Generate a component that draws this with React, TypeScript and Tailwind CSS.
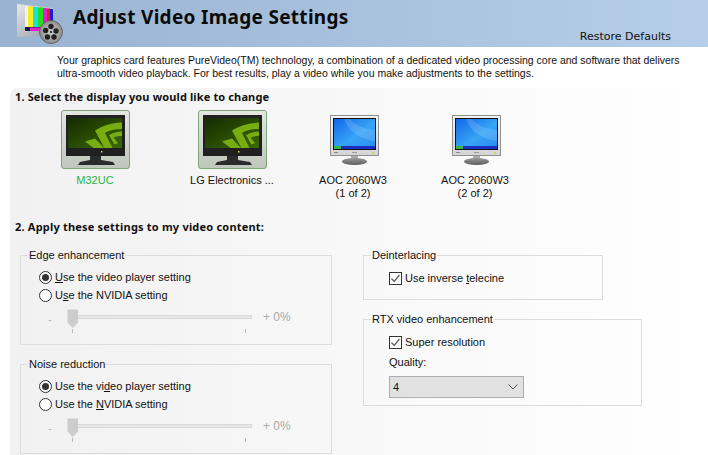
import React from "react"

const ui = "font-['Liberation_Sans',Arial,sans-serif] text-[11px] leading-[15px] text-[#111]"

const NvidiaMonitor = () => (
  <svg width="69" height="59" viewBox="0 0 69 59">
    <defs>
      <linearGradient id="tile" x1="0" y1="0" x2="0" y2="1">
        <stop offset="0" stopColor="#e4e6e2" />
        <stop offset="1" stopColor="#bfc6bb" />
      </linearGradient>
      <linearGradient id="nvscreen" x1="0" y1="0" x2="1" y2="1">
        <stop offset="0" stopColor="#152a02" />
        <stop offset="1" stopColor="#3c6a04" />
      </linearGradient>
      <clipPath id="nvclip">
        <rect x="7" y="8" width="54" height="30" />
      </clipPath>
    </defs>
    <rect x="0.5" y="0.5" width="68" height="58" rx="2.5" fill="url(#tile)" stroke="#7ea777" />
    <rect x="5" y="5" width="59" height="41" fill="#202020" />
    <rect x="7" y="8" width="54" height="30" fill="url(#nvscreen)" />
    <g clipPath="url(#nvclip)" fill="#77ad10">
      <path d="M61 12.5C50 13 41 16 34 20.5L44 39H52L44 23C48 20.5 54 19 61 19Z" />
      <path d="M61 21.5C56 21.5 52 23 48 25L53 34C54 34.5 56 34 57 33L52.5 27.5C55 26.5 58 26 61 26Z" />
      <path d="M24 31.5L34 28.5L44 39H34Z" />
    </g>
    <rect x="40" y="41" width="1.5" height="1.5" fill="#d9d24a" />
    <path d="M29 46H40V50L52 52L54 55H17L19 52L29 50Z" fill="#2b2b2b" />
  </svg>
)

const BlueMonitor = () => (
  <svg width="50" height="51" viewBox="0 0 50 51">
    <defs>
      <linearGradient id="bezel" x1="0" y1="0" x2="0" y2="1">
        <stop offset="0" stopColor="#f4f4f4" />
        <stop offset="1" stopColor="#d4d4d4" />
      </linearGradient>
      <linearGradient id="blue" x1="0" y1="0" x2="1" y2="1">
        <stop offset="0" stopColor="#1167e8" />
        <stop offset="0.55" stopColor="#37a4f6" />
        <stop offset="1" stopColor="#2a8af0" />
      </linearGradient>
      <linearGradient id="foot" x1="0" y1="0" x2="0" y2="1">
        <stop offset="0" stopColor="#9a9a9a" />
        <stop offset="1" stopColor="#5c5c5c" />
      </linearGradient>
    </defs>
    <rect x="0.5" y="0.5" width="48" height="40" fill="url(#bezel)" stroke="#909090" />
    <rect x="3" y="3" width="43" height="32" fill="#111" />
    <rect x="4" y="4" width="41" height="30" fill="url(#blue)" />
    <path d="M14 4C18 16 30 24 45 26V15C34 14 24 10 20 4Z" fill="#ffffff" fillOpacity="0.14" />
    <rect x="4" y="31" width="41" height="3" fill="#1a2fc4" />
    <rect x="4" y="31" width="7" height="3" fill="#36b24a" />
    <rect x="4" y="37" width="4" height="1" fill="#8a8a8a" />
    <rect x="22" y="37" width="5" height="1" fill="#9a9a9a" />
    <rect x="42" y="37" width="2" height="2" fill="#b9dc6a" />
    <rect x="21" y="41" width="7" height="4" fill="#a8a8a8" />
    <ellipse cx="24.5" cy="46.5" rx="12.5" ry="3.5" fill="url(#foot)" />
  </svg>
)

const HeaderIcon = () => (
  <svg width="50" height="40" viewBox="0 0 50 40">
    <defs>
      <linearGradient id="tv" x1="0" y1="0" x2="1" y2="1">
        <stop offset="0" stopColor="#e8e8e8" />
        <stop offset="1" stopColor="#8f9aa6" />
      </linearGradient>
      <radialGradient id="reel">
        <stop offset="0" stopColor="#d8d8d8" />
        <stop offset="1" stopColor="#8a8a8a" />
      </radialGradient>
    </defs>
    <path d="M0 0L37 4V31L0 33Z" fill="url(#tv)" />
    <path d="M8 2L11 2.4V27L8 27.5Z" fill="#f2f2f2" />
    <path d="M11 2.4H16V27H11Z" fill="#f4ee1c" />
    <path d="M16 3H21V27H16Z" fill="#18e0e0" />
    <path d="M21 3.5H26V27H21Z" fill="#1ee01e" />
    <path d="M26 4H30V27H26Z" fill="#e61ec8" />
    <path d="M30 4.5H33V27H30Z" fill="#e21c1c" />
    <path d="M33 5H36V27H33Z" fill="#1a1ae0" />
    <path d="M8 23H36V27H8Z" fill="#15154a" />
    <path d="M13 23.5H25V27H13Z" fill="#e61ec8" />
    <circle cx="34" cy="28" r="11.5" fill="url(#reel)" stroke="#555" strokeWidth="0.7" />
    <circle cx="34" cy="22.5" r="2.7" fill="#222" />
    <circle cx="39" cy="27" r="2.7" fill="#222" />
    <circle cx="37" cy="33" r="2.7" fill="#222" />
    <circle cx="30.5" cy="33" r="2.7" fill="#222" />
    <circle cx="28.7" cy="26.5" r="2.7" fill="#222" />
    <circle cx="34" cy="28" r="1.2" fill="#333" />
  </svg>
)

const Radio = ({ checked, children }: { checked?: boolean; children: React.ReactNode }) => (
  <div className="flex h-[18px] items-center">
    <span className="flex h-[13px] w-[13px] items-center justify-center rounded-full border border-[#333] bg-white">
      {checked && <span className="h-[7px] w-[7px] rounded-full bg-[#333]" />}
    </span>
    <span className="ml-[3px]">{children}</span>
  </div>
)

const Check = ({ children }: { children: React.ReactNode }) => (
  <div className="flex h-[15px] items-center">
    <span className="flex h-[13px] w-[13px] items-center justify-center border border-[#333] bg-white">
      <svg width="11" height="11" viewBox="0 0 11 11">
        <path d="M1.5 5.5L4.2 8.5L9.5 2" fill="none" stroke="#666" strokeWidth="1.4" />
      </svg>
    </span>
    <span className="ml-[3px]">{children}</span>
  </div>
)

const Slider = () => (
  <div className="mt-[5px] flex items-start">
    <span className="mt-[3px] w-[28px] pl-[9px] text-[#b5b5b5]">-</span>
    <div className="relative h-[25px] w-[185px]">
      <div className="absolute left-[6px] right-0 top-[6px] h-[4px] border border-[#dadada] bg-[#e6e6e6]" />
      <svg className="absolute left-0 top-0" width="12" height="20" viewBox="0 0 12 20">
        <path d="M0.5 0.5H11V13.5L5.7 19L0.5 13.5Z" fill="#cccccc" />
      </svg>
      <span className="absolute left-[5px] top-[20px] h-[4px] w-px bg-[#b9b9b9]" />
      <span className="absolute right-[6px] top-[20px] h-[4px] w-px bg-[#b9b9b9]" />
    </div>
    <span className="ml-[11px] mt-[1px] text-[12px] text-[#ababab]">+ 0%</span>
  </div>
)

const Group = ({ title, className, children }: { title: string; className: string; children: React.ReactNode }) => (
  <fieldset className={`border border-[#dcdcdc] ${className}`}>
    <legend className="ml-[7px] px-[1px]">{title}</legend>
    {children}
  </fieldset>
)

const displays = [
  { name: ["M32UC"], nvidia: true, gap: "ml-[35px]", color: "text-[#1fb84a]" },
  { name: ["LG Electronics ..."], nvidia: true, gap: "ml-[37px]", color: "" },
  { name: ["AOC 2060W3", "(1 of 2)"], nvidia: false, gap: "ml-[21px]", color: "" },
  { name: ["AOC 2060W3", "(2 of 2)"], nvidia: false, gap: "ml-[22px]", color: "" },
]

export default function App() {
  return (
    <div className={`h-[455px] w-[708px] overflow-hidden bg-white ${ui}`}>
      <header className="flex h-[47px] bg-linear-to-r from-[#9ab3d1] to-[#b6cee9]">
        <div className="ml-[17px] mt-[4px] w-[56px]">
          <HeaderIcon />
        </div>
        <h1 className="mt-[2px] font-['Noto_Sans',sans-serif] text-[19px] font-bold leading-[30px] tracking-[0.3px] text-[#0a0a0a]">
          Adjust Video Image Settings
        </h1>
        <span className="ml-auto mr-[37px] mt-[29px] font-['DejaVu_Sans',sans-serif] text-[11px] leading-[15px]">
          Restore Defaults
        </span>
      </header>

      <p className="ml-[57px] h-[41px] whitespace-nowrap pt-[7px] text-[10.5px] leading-[13px]">
        Your graphics card features PureVideo(TM) technology, a combination of a dedicated video processing core and software that delivers
        <br />
        ultra-smooth video playback. For best results, play a video while you make adjustments to the settings.
      </p>

      <main className="ml-[10px] h-[367px] rounded-tl-[8px] bg-linear-to-r from-[#f1f1f1] to-white pt-[2px]">
        <h2 className="ml-[5px] font-['Noto_Sans',sans-serif] text-[11px] font-bold leading-[14px] tracking-[0.13px]">
          1. Select the display you would like to change
        </h2>
        <div className="mt-[6px] flex h-[95px] items-start">
          {displays.map((d, i) => (
            <div key={i} className={`flex w-[100px] flex-col items-center ${d.gap} ${d.color}`}>
              <div className="flex h-[63px] items-start">
                {d.nvidia ? <NvidiaMonitor /> : <div className="ml-[4px] mt-[5px]"><BlueMonitor /></div>}
              </div>
              {d.name.map((line) => (
                <span key={line} className="mt-[2px] h-[11px] leading-[11px]">{line}</span>
              ))}
            </div>
          ))}
        </div>
        <h2 className="ml-[5px] mt-[15px] font-['Noto_Sans',sans-serif] text-[11px] font-bold leading-[14px] tracking-[0.2px]">
          2. Apply these settings to my video content:
        </h2>

        <div className="ml-[10px] mt-[14px] flex">
          <div className="w-[312px]">
            <Group title="Edge enhancement" className="h-[97px]">
              <div className="pl-[18px] pt-[5px]">
                <Radio checked><u>U</u>se the video player setting</Radio>
                <Radio>U<u>s</u>e the NVIDIA setting</Radio>
                <Slider />
              </div>
            </Group>
            <Group title="Noise reduction" className="mt-[12px] h-[97px]">
              <div className="pl-[18px] pt-[5px]">
                <Radio checked>Use the vi<u>d</u>eo player setting</Radio>
                <Radio>Use the <u>N</u>VIDIA setting</Radio>
                <Slider />
              </div>
            </Group>
          </div>
          <div className="ml-[31px] w-[280px]">
            <Group title="Deinterlacing" className="h-[52px] w-[240px]">
              <div className="pl-[25px] pt-[8px]">
                <Check>Use inverse <u>t</u>elecine</Check>
              </div>
            </Group>
            <Group title="RTX video enhancement" className="mt-[12px] h-[94px] w-[279px]">
              <div className="pl-[25px] pt-[8px]">
                <Check>Super resolution</Check>
                <div className="mt-[5px]">Quality:</div>
                <div className="mt-[6px] flex h-[22px] w-[135px] items-center justify-between border border-[#adadad] bg-[#e1e1e1] pl-[3px] pr-[5px]">
                  <span>4</span>
                  <svg width="10" height="6" viewBox="0 0 10 6">
                    <path d="M0.5 0.5L5 5L9.5 0.5" fill="none" stroke="#555" />
                  </svg>
                </div>
              </div>
            </Group>
          </div>
        </div>
      </main>
    </div>
  )
}
